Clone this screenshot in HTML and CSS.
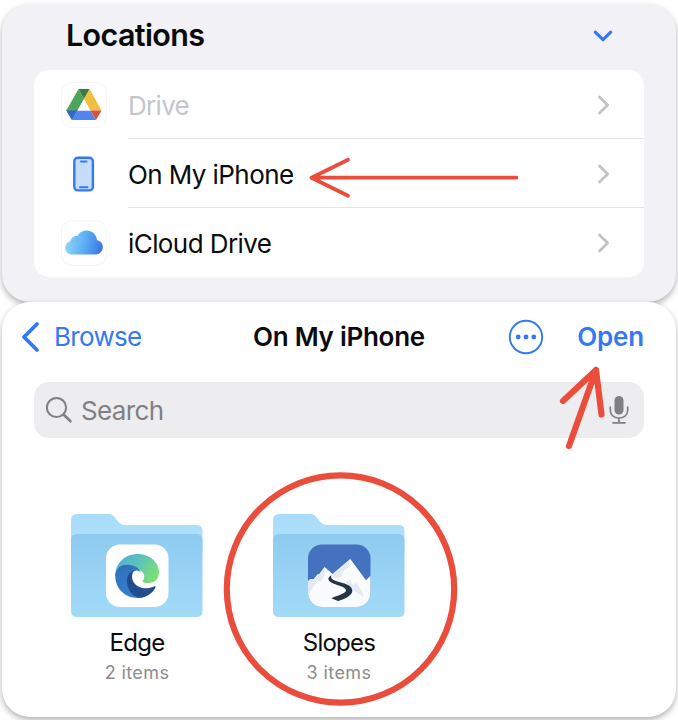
FILE: index.html
```html
<!DOCTYPE html>
<html lang="en">
<head>
<meta charset="utf-8">
<title>On My iPhone</title>
<link rel="stylesheet" href="styles.css">
</head>
<body>
<main class="screen">
  <section class="panel locations">
    <header class="locations-header">
      <h1>Locations</h1>
      <svg class="expand" width="24" height="16" viewBox="0 0 24 16"><path d="M4.300 4.200 12 11.700l7.700-7.500"/></svg>
    </header>
    <ul class="list">
      <li class="row">
        <span class="tile"><svg width="36" height="32" viewBox="0 0 36 32">
          <path fill="#4fa45b" d="M12.500 0 .3 21.500 6 31 18 10z"/>
          <path fill="#3b7d3c" d="M12.500 0h11.200L18 10z"/>
          <path fill="#f2bf42" d="M23.700 0 35.500 21.500H24.400L18 10z"/>
          <path fill="#3467cc" d="M.3 21.500h11L6 31z"/>
          <path fill="#5285ed" d="M11.300 21.500h13.100L30 31H6z"/>
          <path fill="#d9503f" d="M24.400 21.500h11.100L30 31z"/>
          <path fill="#fff" d="m18 10.400 6.300 11.100H11.600z"/></svg></span>
        <div class="cell"><span class="muted">Drive</span><svg class="chevron" width="14" height="22" viewBox="0 0 14 22"><path d="m2.500 3 8.200 8-8.200 8"/></svg></div>
      </li>
      <li class="row">
        <span class="tile plain"><svg width="24" height="38" viewBox="0 0 24 38"><rect x="2.300" y="2.800" width="18.600" height="32.600" rx="3.500" fill="#c5dcfb" stroke="#3478f6" stroke-width="2.400"/><path d="M9 6.500h5.500M8 32.200h7.500" stroke="#3478f6" stroke-width="2" stroke-linecap="round"/></svg></span>
        <div class="cell"><span>On My iPhone</span><svg class="chevron" width="14" height="22" viewBox="0 0 14 22"><path d="m2.500 3 8.200 8-8.200 8"/></svg></div>
      </li>
      <li class="row">
        <span class="tile"><svg width="38" height="26" viewBox="0 0 38 26">
          <defs><linearGradient id="cloud" x1="0" y1=".5" x2="1" y2=".65"><stop offset="0" stop-color="#94d7f5"/><stop offset=".5" stop-color="#5baff4"/><stop offset="1" stop-color="#3a75e4"/></linearGradient></defs>
          <path fill="url(#cloud)" d="M7.500 24.500C3.200 24.500.2 21.600.2 17.700c0-3.200 2.300-5.800 5.300-6.500C6 7.700 9 5.500 12.300 6.200 14 2.800 17.500.6 21.500.6c5.600 0 10.100 4.100 10.500 9.700 3.400.6 5.800 3.300 5.800 6.700 0 4.200-3.100 7.500-7.200 7.500z"/>
          <path fill="none" stroke="#4ea5e6" stroke-opacity=".4" d="M12.300 6.200c-1.200 1.800-1.200 4 .5 6M5.500 11.200c1.500-.3 3.100-.1 4.500.8"/></svg></span>
        <div class="cell"><span class="icloud">iCloud Drive</span><svg class="chevron" width="14" height="22" viewBox="0 0 14 22"><path d="m2.500 3 8.200 8-8.200 8"/></svg></div>
      </li>
    </ul>
  </section>

  <section class="panel browser">
    <nav class="nav">
      <a class="back"><svg width="22" height="34" viewBox="0 0 22 34"><path d="M17 4 4 17l13 13"/></svg><span>Browse</span></a>
      <h2>On My iPhone</h2>
      <div class="actions">
        <svg width="36" height="36" viewBox="0 0 36 36"><circle cx="18" cy="18" r="16.200" fill="none" stroke="#3478f6" stroke-width="1.900"/><g fill="#3478f6"><circle cx="10.200" cy="18" r="2.400"/><circle cx="18" cy="18" r="2.400"/><circle cx="25.800" cy="18" r="2.400"/></g></svg>
        <a class="open">Open</a>
      </div>
    </nav>
    <div class="search">
      <svg width="28" height="28" viewBox="0 0 28 28" fill="none" stroke="#808084" stroke-linecap="round"><circle cx="11.500" cy="11.500" r="9.600" stroke-width="2"/><path stroke-width="2.600" d="m18.800 18.800 6.700 6.500"/></svg>
      <span>Search</span>
      <svg class="mic" width="20" height="30" viewBox="0 0 20 30" fill="none" stroke="#808084" stroke-width="1.700" stroke-linecap="round"><rect x="5.500" y="1" width="9" height="18.500" rx="4.500" fill="#808084" stroke="none"/><path d="M1.300 12v3c0 5 3.700 8 8.700 8s8.700-3 8.700-8v-3M10 23v4.600M4 27.800h12"/></svg>
    </div>
    <div class="folders">
      <article class="folder">
        <svg width="134" height="106" viewBox="0 0 134 106">
          <defs>
            <linearGradient id="back" x2="0" y2="1"><stop stop-color="#a9dcf9"/><stop offset="1" stop-color="#b1e2fb"/></linearGradient>
            <linearGradient id="front" x2="0" y2="1"><stop stop-color="#8ecbf0"/><stop offset="1" stop-color="#a3daf8"/></linearGradient>
            <linearGradient id="edgeTop" x1="0" x2="1" y2=".5"><stop stop-color="#4cabd9"/><stop offset=".5" stop-color="#5bbfc0"/><stop offset="1" stop-color="#7add78"/></linearGradient>
            <linearGradient id="edgeLeft" x2=".4" y2="1"><stop stop-color="#2f6fb5"/><stop offset="1" stop-color="#367fd4"/></linearGradient>
          </defs>
          <path fill="url(#back)" d="M1 40V7q0-6 6-6h31c4 0 5.500 1.500 8 5 3 4.200 5 6 10 6h70.500q6 0 6 6v22z"/>
          <path fill="url(#front)" d="M1 27q0-6 6-6h119.500q6 0 6 6v71q0 6-6 6H7q-6 0-6-6z"/>
          <rect x="36" y="31.500" width="62.500" height="62.500" rx="14" fill="#fff"/>
          <path fill="url(#edgeTop)" d="M45.300 63C45.300 50 55 41 67.500 41 80 41 89 49.500 89 59c0 7-4.500 11-10.500 11-3.500 0-6.500-.5-6-2 4-4 1-11-4.500-11z"/>
          <path fill="url(#edgeLeft)" d="M45.300 63C45.500 56 50 51.700 56.500 51.700c7 0 12.500 3 14.500 7.500-3-2.500-7-2.500-8.500.5-4 5-1.500 13 4 16 5 3 11 2.500 18-1C81.500 81 75 84.900 67.500 84.900 54.500 84.900 45.300 75 45.300 63z"/>
          <path fill="#204e91" d="M64 57.200c-5 1.800-7.800 7-7 12.500C58 78 63 83.500 69.500 84.800 77 84.500 82.500 80 85.400 74.800c.5-1.300-.3-1.900-1.500-1.300-4 2-10 2.500-14.500.5-7-3-9.500-11-5.400-16.800z"/>
        </svg>
        <h3>Edge</h3><p>2 items</p>
      </article>
      <article class="folder">
        <svg width="134" height="106" viewBox="0 0 134 106">
          <defs><clipPath id="slopesTile"><rect x="36" y="31.500" width="62.500" height="62.500" rx="14"/></clipPath></defs>
          <path fill="url(#back)" d="M1 40V7q0-6 6-6h31c4 0 5.500 1.500 8 5 3 4.200 5 6 10 6h70.500q6 0 6 6v22z"/>
          <path fill="url(#front)" d="M1 27q0-6 6-6h119.500q6 0 6 6v71q0 6-6 6H7q-6 0-6-6z"/>
          <g clip-path="url(#slopesTile)">
            <path fill="#4472bf" d="M35 31h64v64H35z"/>
            <path fill="#f9fbfe" d="m35 69 3.500-3 3 .5 4-5h1.500l5.700-7.500 7.800 7L78.300 46 94 67.300l5-5V95H35z"/>
            <path fill="#e4eaf2" d="m52.700 54-5.700 7.500h-1.500l-4 5-3-.5-3.500 3v15l7-11 4-5 3 1 4-8zM78.300 46 60.500 61.500l3.500 3.500 5-1 4-8 3-1zM74 69l4-2 2 5 5-2 5 9 2 5-8-5-5-2z"/>
            <path fill="#253747" d="M59.500 62.300c-4 2-4 5-.5 7 5 3.300 14.500 4 15 8 .2 3.200-9 5.300-14.700 8L66 88c7-2 14.300-5.500 14.300-10.300 0-8.200-18.300-8-20.800-12.400-.6-1-.5-2 0-3z"/>
          </g>
        </svg>
        <h3>Slopes</h3><p>3 items</p>
      </article>
    </div>
  </section>
  <svg class="annotations" width="678" height="720" viewBox="0 0 678 720">
    <path stroke-width="3.800" d="M516.500 177.700H312m36-18-36.500 18 36.500 18"/>
    <path stroke-width="6.200" d="m569 446 27-76m-33 31 33-31 5.500 44.500"/>
    <circle cx="340.500" cy="589" r="113.700" stroke-width="6.200"/>
  </svg>
</main>
</body>
</html>
```
FILE: styles.css
```css
* { box-sizing: border-box; }
body { margin: 0; background: #fff; color: #0b0b0c; font-family: Inter, "Liberation Sans", sans-serif; }
h1, h2, h3, p, ul { margin: 0; padding: 0; font-weight: 400; }
svg { display: block; flex: none; }
.screen { position: relative; width: 678px; height: 720px; padding: 4px 2px 0; overflow: hidden; }
.panel { width: 674px; border-radius: 28px; box-shadow: 0 3px 6px rgba(0,0,0,.3); }
.locations { height: 298px; padding: 0 32px; background: #f1f1f6; }
.locations-header { height: 66px; padding: 0 29px 6px 32px; display: flex; align-items: center; justify-content: space-between; }
h1 { font-size: 30.500px; font-weight: 600; letter-spacing: -.65px; }
.expand { fill: none; stroke: #3478f6; stroke-width: 3.200; stroke-linecap: round; stroke-linejoin: round; margin-top: 4px; }
.list { list-style: none; height: 207px; border-radius: 15px; background: #fff; overflow: hidden; }
.row { height: 69px; display: flex; align-items: center; padding-left: 27px; }
.tile { width: 46px; height: 46px; margin-right: 21px; border: 1px solid #f4f4f5; border-radius: 11px; display: flex; align-items: center; justify-content: center; }
.plain { border-color: transparent; }
.cell { flex: 1; height: 69px; border-bottom: 1.500px solid #e4e4e7; padding: 2px 33px 0 0; display: flex; align-items: center; justify-content: space-between; font-size: 26px; letter-spacing: -.58px; }
.row:last-child .cell { border-bottom-color: transparent; }
.muted { color: #c6c6c8; letter-spacing: -.7px; }
.chevron { fill: none; stroke: #c3c3c5; stroke-width: 2.800; stroke-linecap: round; stroke-linejoin: round; }
.browser { position: relative; height: 415px; padding: 0 32px; background: #fff; }
.nav { height: 80px; margin: 0 0 0 -14px; padding-bottom: 11px; display: grid; grid-template-columns: 1fr auto 1fr; align-items: center; font-size: 26px; color: #3478f6; }
.back { display: flex; align-items: center; gap: 12px; letter-spacing: -.7px; }
.back svg { fill: none; stroke: #3478f6; stroke-width: 3.800; stroke-linecap: round; stroke-linejoin: round; }
h2 { margin-left: 14px; font-size: 26px; font-weight: 600; letter-spacing: -.27px; color: #0b0b0c; }
.actions { display: flex; align-items: center; justify-content: flex-end; gap: 33px; }
.open { font-weight: 600; letter-spacing: -.2px; }
.search { height: 56px; padding: 0 15px 0 11px; border-radius: 15px; background: #ededef; display: flex; align-items: center; gap: 8px; color: #808084; font-size: 26px; letter-spacing: -.65px; }
.search span { padding-top: 1px; }
.mic { margin-left: auto; }
.folders { display: flex; gap: 68px; padding: 75px 0 0 36px; }
.folder { width: 134px; text-align: center; }
h3 { margin-top: 9px; font-size: 24px; line-height: 30px; letter-spacing: -.75px; white-space: nowrap; }
p { margin-top: 1px; font-size: 18px; line-height: 28px; letter-spacing: .4px; color: #8c8c90; }
.annotations { position: absolute; left: 0; top: 0; fill: none; stroke: #eb4d3d; stroke-linecap: round; stroke-linejoin: round; pointer-events: none; }
```
